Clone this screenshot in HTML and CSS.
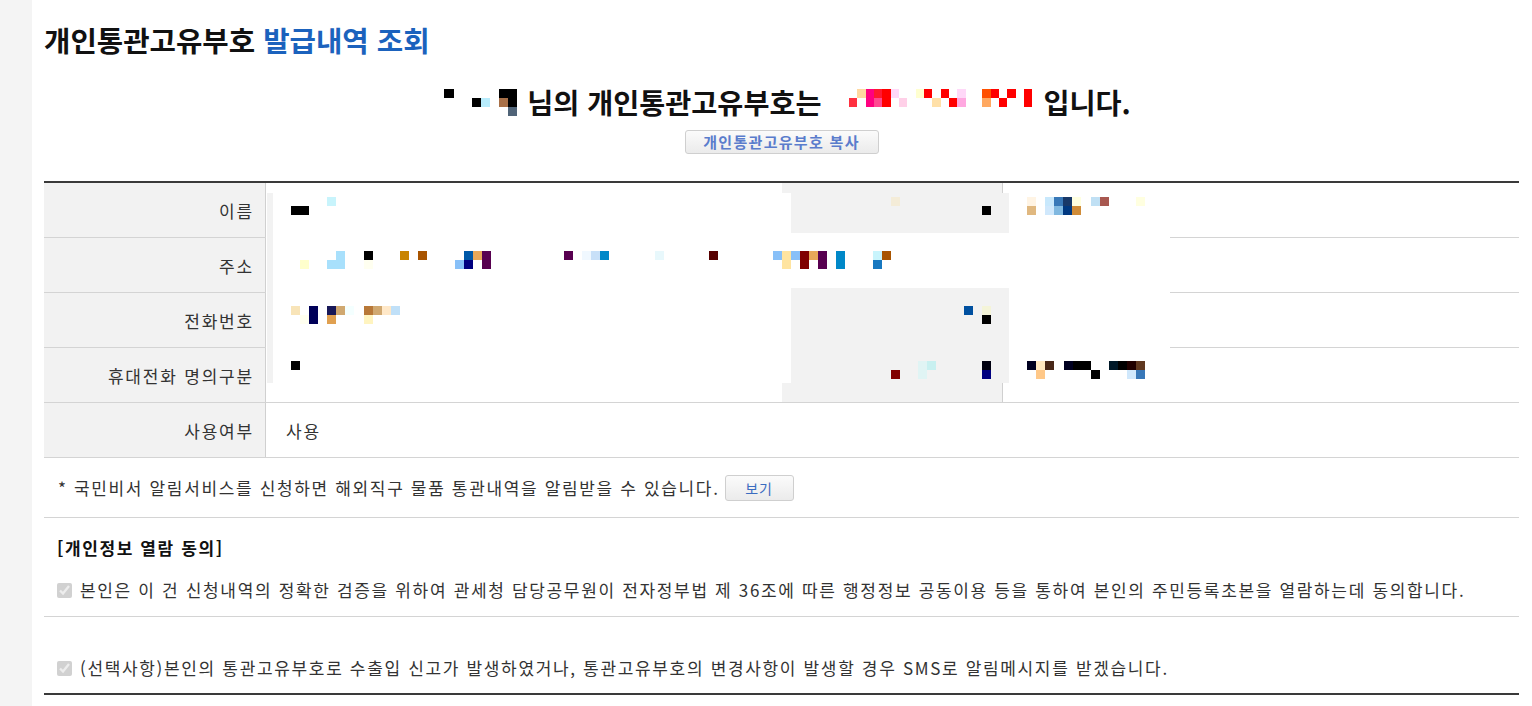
FILE: index.html
```html
<!DOCTYPE html>
<html lang="ko">
<head>
<meta charset="utf-8">
<title>개인통관고유부호 발급내역 조회</title>
<link rel="stylesheet" href="styles.css">
</head>
<body>
<aside class="sidebar"></aside>
<main class="content">
  <h1 class="title">개인통관고유부호 <span class="accent">발급내역 조회</span></h1>

  <div class="summary">
    <p class="summary-text">
      <svg class="mosaic-name" width="74" height="27" viewBox="0 0 74 27" shape-rendering="crispEdges" aria-hidden="true">
        <rect x="0" y="0" width="10" height="9" fill="#000"/>
        <rect x="28" y="9" width="9" height="9" fill="#000"/>
        <rect x="37" y="9" width="9" height="9" fill="#b8ecfc"/>
        <rect x="55" y="0" width="18" height="9" fill="#000"/>
        <rect x="55" y="9" width="9" height="9" fill="#a87048"/>
        <rect x="64" y="9" width="9" height="9" fill="#000"/>
        <rect x="64" y="18" width="9" height="9" fill="#506478"/>
      </svg>
      <span>님의 개인통관고유부호는</span>
      <svg class="mosaic-code" width="184" height="18" viewBox="0 0 184 18" shape-rendering="crispEdges" aria-hidden="true">
        <rect x="8" y="0" width="9" height="9" fill="#ffd8a0"/>
        <rect x="17" y="0" width="8" height="18" fill="#ff0080"/>
        <rect x="25" y="0" width="8" height="9" fill="#ff1830"/>
        <rect x="33" y="0" width="9" height="18" fill="#ff0000"/>
        <rect x="42" y="0" width="8" height="9" fill="#ffd8f8"/>
        <rect x="67" y="0" width="8" height="9" fill="#ffffd0"/>
        <rect x="75" y="0" width="8" height="9" fill="#ff0000"/>
        <rect x="92" y="0" width="8" height="9" fill="#ff0000"/>
        <rect x="108" y="0" width="9" height="9" fill="#ffd8f8"/>
        <rect x="133" y="0" width="9" height="9" fill="#ff5000"/>
        <rect x="142" y="0" width="8" height="9" fill="#ff0000"/>
        <rect x="158" y="0" width="9" height="9" fill="#ff0000"/>
        <rect x="175" y="0" width="8" height="18" fill="#ff0000"/>
        <rect x="0" y="9" width="8" height="9" fill="#ff3040"/>
        <rect x="25" y="9" width="8" height="9" fill="#ff4890"/>
        <rect x="50" y="9" width="8" height="9" fill="#ffd0e8"/>
        <rect x="83" y="9" width="9" height="9" fill="#ffe0a8"/>
        <rect x="100" y="9" width="8" height="9" fill="#ff0000"/>
        <rect x="108" y="9" width="9" height="9" fill="#ffa8e0"/>
        <rect x="133" y="9" width="9" height="9" fill="#ffa860"/>
        <rect x="150" y="9" width="8" height="9" fill="#ff0000"/>
      </svg>
      <span>입니다.</span>
    </p>
    <button type="button" class="btn btn-copy">개인통관고유부호 복사</button>
  </div>

  <div class="info">
    <div class="info-row"><div class="info-label">이름</div><div class="info-value"></div></div>
    <div class="info-row"><div class="info-label">주소</div><div class="info-value"></div></div>
    <div class="info-row"><div class="info-label">전화번호</div><div class="info-value"></div></div>
    <div class="info-row"><div class="info-label">휴대전화 명의구분</div><div class="info-value"></div></div>
    <div class="info-row"><div class="info-label">사용여부</div><div class="info-value">사용</div></div>

    <svg class="redact" width="904" height="219" viewBox="0 0 904 219" shape-rendering="crispEdges" aria-hidden="true">
      <rect x="0" y="0" width="904" height="219" fill="#fff"/>
      <rect x="1" y="10" width="6" height="190" fill="#f2f2f2"/>
      <rect x="516" y="0" width="220" height="10" fill="#f2f2f2"/>
      <rect x="525" y="10" width="218" height="40" fill="#f2f2f2"/>
      <rect x="525" y="105" width="218" height="95" fill="#f2f2f2"/>
      <rect x="516" y="200" width="220" height="19" fill="#f2f2f2"/>
      <rect x="736" y="0" width="1" height="10" fill="#d0d0d0"/>
      <rect x="736" y="200" width="1" height="19" fill="#d0d0d0"/>
      <!-- row 1 -->
      <rect x="61" y="14" width="9" height="9" fill="#c8f4fc"/>
      <rect x="25" y="23" width="18" height="9" fill="#000"/>
      <rect x="625" y="14" width="9" height="9" fill="#f4ecd8"/>
      <rect x="716" y="23" width="9" height="9" fill="#000"/>
      <rect x="761" y="14" width="9" height="9" fill="#fff4e4"/>
      <rect x="761" y="23" width="9" height="9" fill="#e0b880"/>
      <rect x="779" y="14" width="9" height="9" fill="#c8e8fc"/>
      <rect x="779" y="23" width="9" height="9" fill="#d0e8fc"/>
      <rect x="788" y="14" width="9" height="9" fill="#3878b8"/>
      <rect x="788" y="23" width="9" height="9" fill="#80b8e0"/>
      <rect x="797" y="14" width="9" height="9" fill="#183868"/>
      <rect x="797" y="23" width="9" height="9" fill="#003880"/>
      <rect x="806" y="14" width="9" height="9" fill="#ffffe0"/>
      <rect x="806" y="23" width="9" height="9" fill="#d08c38"/>
      <rect x="825" y="14" width="9" height="9" fill="#c0e0f4"/>
      <rect x="834" y="14" width="9" height="9" fill="#a85850"/>
      <rect x="870" y="14" width="9" height="9" fill="#ffffe0"/>
      <!-- row 2 -->
      <rect x="34" y="77" width="9" height="9" fill="#ffffcc"/>
      <rect x="70" y="68" width="9" height="9" fill="#a8e0fc"/>
      <rect x="61" y="77" width="18" height="9" fill="#a8e0fc"/>
      <rect x="98" y="68" width="9" height="9" fill="#000"/>
      <rect x="98" y="77" width="9" height="9" fill="#fffff0"/>
      <rect x="134" y="68" width="9" height="9" fill="#c88400"/>
      <rect x="152" y="68" width="9" height="9" fill="#a85400"/>
      <rect x="198" y="68" width="9" height="9" fill="#0058a8"/>
      <rect x="207" y="68" width="9" height="9" fill="#e8a858"/>
      <rect x="216" y="68" width="9" height="18" fill="#580050"/>
      <rect x="189" y="77" width="9" height="9" fill="#88c0f8"/>
      <rect x="198" y="77" width="9" height="9" fill="#000080"/>
      <rect x="298" y="68" width="9" height="9" fill="#580050"/>
      <rect x="316" y="68" width="9" height="9" fill="#f0f8ff"/>
      <rect x="325" y="68" width="9" height="9" fill="#c8e0f8"/>
      <rect x="334" y="68" width="9" height="9" fill="#0088c8"/>
      <rect x="389" y="68" width="9" height="9" fill="#e8f8fc"/>
      <rect x="443" y="68" width="9" height="9" fill="#580000"/>
      <rect x="507" y="68" width="9" height="9" fill="#88c0f8"/>
      <rect x="516" y="68" width="9" height="18" fill="#ffe4a0"/>
      <rect x="525" y="68" width="9" height="9" fill="#88c0f8"/>
      <rect x="534" y="68" width="9" height="18" fill="#800000"/>
      <rect x="543" y="68" width="9" height="9" fill="#e8a858"/>
      <rect x="552" y="68" width="9" height="18" fill="#580050"/>
      <rect x="570" y="68" width="9" height="18" fill="#0088c8"/>
      <rect x="607" y="68" width="9" height="9" fill="#c8f4fc"/>
      <rect x="616" y="68" width="9" height="9" fill="#a85400"/>
      <rect x="607" y="77" width="9" height="9" fill="#1878c0"/>
      <!-- row 3 -->
      <rect x="25" y="123" width="9" height="9" fill="#f8e4b8"/>
      <rect x="34" y="132" width="9" height="9" fill="#fffff0"/>
      <rect x="43" y="123" width="9" height="18" fill="#000058"/>
      <rect x="61" y="123" width="9" height="9" fill="#181858"/>
      <rect x="70" y="123" width="9" height="9" fill="#d0a870"/>
      <rect x="61" y="132" width="9" height="9" fill="#e0a050"/>
      <rect x="79" y="123" width="9" height="9" fill="#f4ffff"/>
      <rect x="98" y="123" width="9" height="9" fill="#b87838"/>
      <rect x="107" y="123" width="9" height="9" fill="#d0a870"/>
      <rect x="116" y="123" width="9" height="9" fill="#ffe8c8"/>
      <rect x="125" y="123" width="9" height="9" fill="#c0e0f8"/>
      <rect x="98" y="132" width="9" height="9" fill="#fff4c0"/>
      <rect x="698" y="123" width="9" height="9" fill="#0050a0"/>
      <rect x="716" y="123" width="9" height="9" fill="#f4f4d8"/>
      <rect x="716" y="132" width="9" height="9" fill="#000"/>
      <!-- row 4 -->
      <rect x="25" y="178" width="9" height="9" fill="#000"/>
      <rect x="652" y="178" width="9" height="18" fill="#e0f4f4"/>
      <rect x="661" y="178" width="9" height="9" fill="#c8f0f0"/>
      <rect x="625" y="187" width="9" height="9" fill="#800000"/>
      <rect x="716" y="178" width="9" height="9" fill="#000010"/>
      <rect x="716" y="187" width="9" height="9" fill="#000080"/>
      <rect x="761" y="178" width="9" height="9" fill="#000020"/>
      <rect x="770" y="178" width="9" height="9" fill="#ffe8c0"/>
      <rect x="779" y="178" width="9" height="9" fill="#482818"/>
      <rect x="770" y="187" width="9" height="9" fill="#ffc888"/>
      <rect x="798" y="178" width="9" height="9" fill="#000020"/>
      <rect x="807" y="178" width="18" height="9" fill="#000"/>
      <rect x="825" y="187" width="9" height="9" fill="#000"/>
      <rect x="843" y="178" width="9" height="9" fill="#001828"/>
      <rect x="852" y="178" width="9" height="9" fill="#000"/>
      <rect x="861" y="178" width="9" height="9" fill="#200000"/>
      <rect x="870" y="178" width="9" height="9" fill="#603820"/>
      <rect x="861" y="187" width="9" height="9" fill="#d0e8fc"/>
      <rect x="870" y="187" width="9" height="9" fill="#3878b8"/>
    </svg>
  </div>

  <div class="notice">
    <span>* 국민비서 알림서비스를 신청하면 해외직구 물품 통관내역을 알림받을 수 있습니다.</span>
    <button type="button" class="btn btn-view">보기</button>
  </div>

  <section class="consent">
    <h2 class="consent-title">[개인정보 열람 동의]</h2>
    <label class="agree"><input type="checkbox" checked disabled><span>본인은 이 건 신청내역의 정확한 검증을 위하여 관세청 담당공무원이 전자정부법 제 36조에 따른 행정정보 공동이용 등을 통하여 본인의 주민등록초본을 열람하는데 동의합니다.</span></label>
  </section>

  <section class="consent-sms">
    <label class="agree"><input type="checkbox" checked disabled><span>(선택사항)본인의 통관고유부호로 수출입 신고가 발생하였거나, 통관고유부호의 변경사항이 발생할 경우 SMS로 알림메시지를 받겠습니다.</span></label>
  </section>
</main>
</body>
</html>
```

FILE: styles.css
```css
* { box-sizing: border-box; }

html, body {
  margin: 0;
  padding: 0;
  background: #fff;
}

body {
  display: flex;
  min-height: 706px;
  font-family: "Noto Sans CJK KR", "Noto Sans", sans-serif;
  color: #333;
}

.sidebar {
  flex: none;
  width: 32px;
  background: #f4f4f4;
}

.content {
  flex: none;
  width: 1475px;
  margin-left: 12px;
}

.title {
  margin: 0;
  padding-top: 22px;
  font-size: 28.7px;
  line-height: 36px;
  letter-spacing: 0;
  font-weight: 700;
  color: #111;
}

.title .accent { color: #1b62bd; }

.summary {
  margin-top: 24px;
  margin-bottom: 27px;
}

.summary-text {
  margin: 0;
  padding-left: 12px;
  display: flex;
  justify-content: center;
  align-items: center;
  height: 40px;
  font-size: 28.3px;
  line-height: 40px;
  font-weight: 700;
  color: #111;
  white-space: pre;
}

.mosaic-name { margin-right: 9px; }
.mosaic-code { margin: 0 10px 8px 28px; }

.btn {
  display: block;
  padding: 0;
  font-family: inherit;
  border: 1px solid #cfcfcf;
  border-radius: 3px;
  background: linear-gradient(#fbfbfb, #ebebeb);
  cursor: pointer;
}

.btn-copy {
  margin: 8px auto 0;
  width: 194px;
  height: 24px;
  font-size: 15px;
  line-height: 22px;
  font-weight: 700;
  letter-spacing: 1.3px;
  color: #5a7ccc;
}

.info {
  position: relative;
  border-top: 2px solid #3a3a3a;
}

.info-row {
  display: grid;
  grid-template-columns: 222px 1fr;
  height: 55px;
  border-bottom: 1px solid #d4d4d4;
  font-size: 17px;
  letter-spacing: 1.8px;
}

.info-label {
  display: flex;
  align-items: center;
  justify-content: flex-end;
  padding-right: 11px;
  background: #f2f2f2;
  border-right: 1px solid #d0d0d0;
}

.info-value {
  display: flex;
  align-items: center;
  padding-left: 20px;
}

.redact {
  position: absolute;
  left: 222px;
  top: 0;
  display: block;
}

.notice {
  display: flex;
  align-items: center;
  height: 60px;
  padding-left: 14px;
  border-bottom: 1px solid #d4d4d4;
  font-size: 17px;
  letter-spacing: 1.65px;
}

.btn-view {
  margin-left: 5px;
  width: 69px;
  height: 26px;
  font-size: 14px;
  letter-spacing: 1px;
  color: #3a6cc0;
}

.consent {
  padding: 20px 13px 16px;
  border-bottom: 1px solid #d4d4d4;
}

.consent-title {
  margin: 0;
  font-size: 17px;
  line-height: 20px;
  letter-spacing: 1.6px;
  font-weight: 700;
  color: #111;
}

.agree {
  display: flex;
  align-items: center;
  font-size: 17px;
  line-height: 20px;
  letter-spacing: 1.66px;
}

.consent .agree { margin-top: 22px; }

.agree input {
  flex: none;
  width: 15px;
  height: 15px;
  margin: 0 8px 0 0;
}

.consent-sms {
  padding: 41px 13px 15px;
  border-bottom: 2px solid #3a3a3a;
}
```
